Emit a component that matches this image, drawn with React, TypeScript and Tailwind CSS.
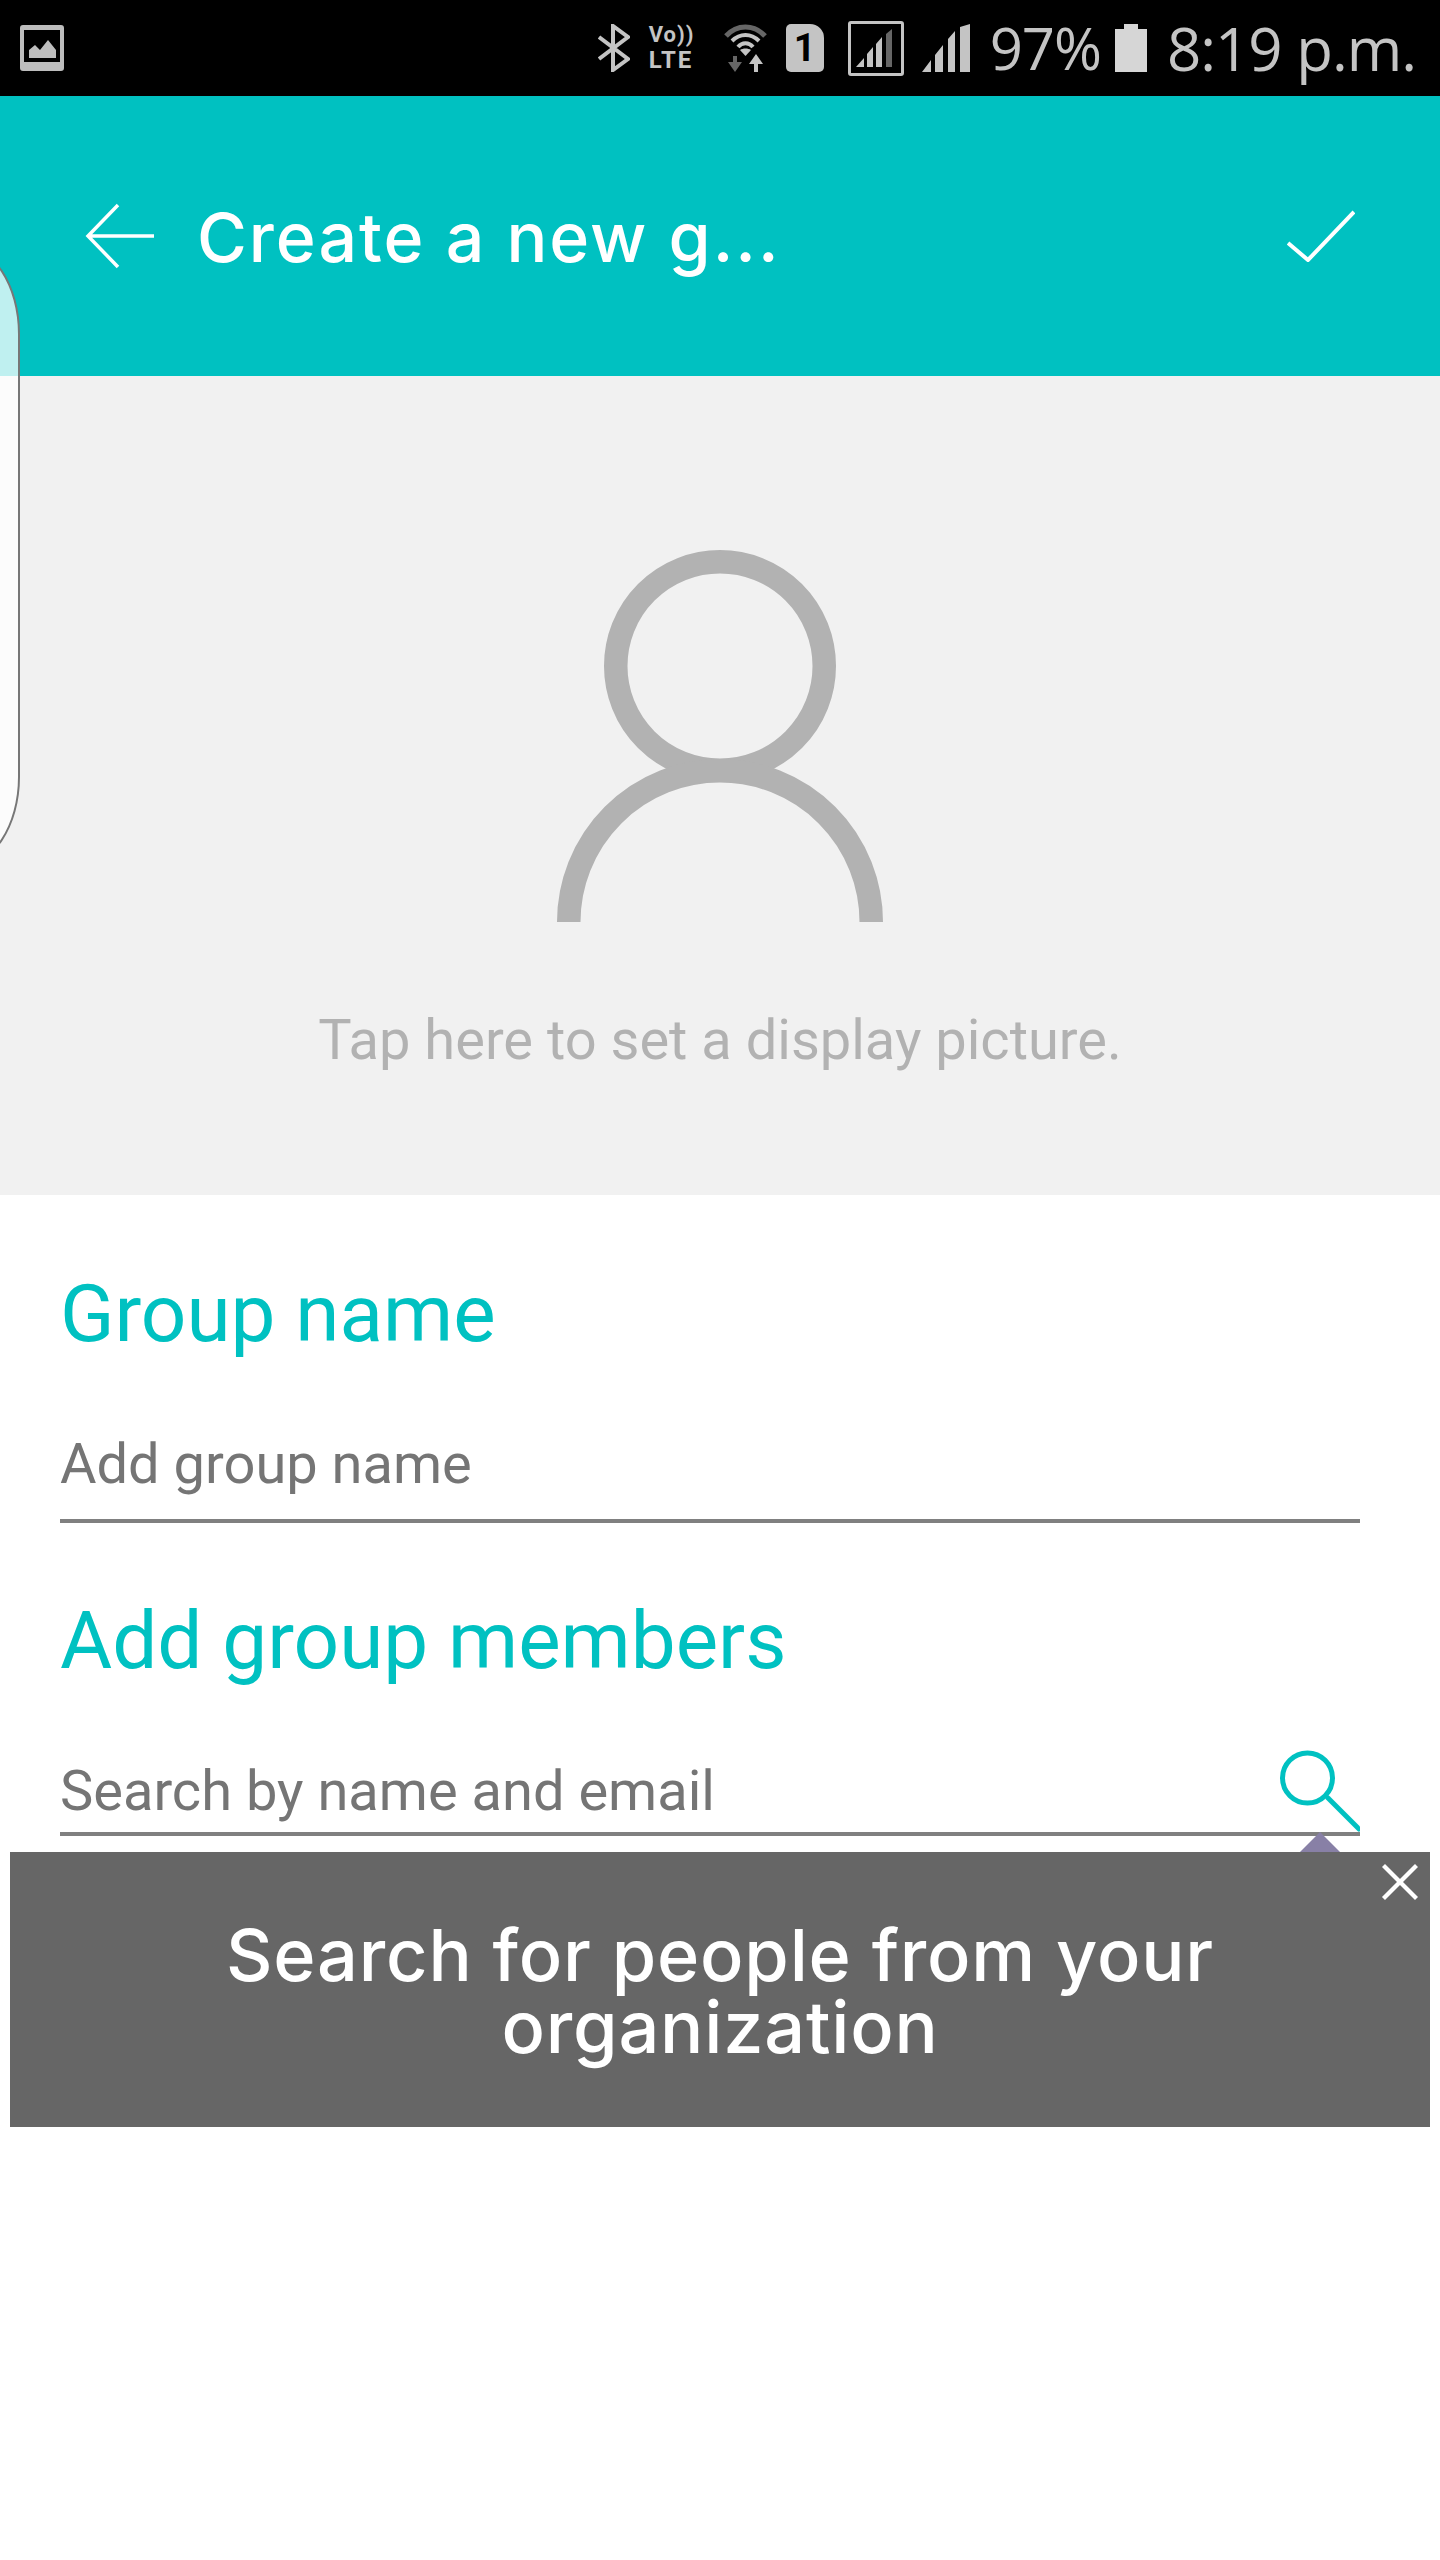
import { X } from "lucide-react";

const SANS = "font-['Roboto','Liberation_Sans',sans-serif]";
const GEO = "font-['Inter','Noto_Sans',sans-serif]";

function StatusIcons() {
  return (
    <div className="flex items-center pr-[24px] text-[#c4c4c4]">
      {/* bluetooth */}
      <svg className="h-[48px] w-[32px]" viewBox="0 0 32 48" fill="none" stroke="#c4c4c4" strokeWidth="4">
        <path d="M1 13 L30 35 L15 46 V2 L30 13 L1 35" />
      </svg>
      {/* volte */}
      <div className="ml-[19px] flex h-[48px] w-[46px] flex-col items-start gap-[2px] font-['Roboto',sans-serif] font-bold">
        <span className="text-[22px] leading-[22px] tracking-[1px]">Vo))</span>
        <span className="text-[24px] leading-[24px] tracking-[2px]">LTE</span>
      </div>
      {/* wifi */}
      <svg className="ml-[29px] h-[48px] w-[43px]" viewBox="0 0 43 48" fill="none">
        <path d="M2 12 C13 0 30 0 41 12" stroke="#666" strokeWidth="5" />
        <path d="M8 17 C16 9 27 9 35 17" stroke="#c4c4c4" strokeWidth="4" />
        <path d="M14 23 C18 18 25 18 29 23" stroke="#c4c4c4" strokeWidth="4" />
        <path d="M21.5 32 L16 26 C19 24 24 24 27 26 Z" fill="#c4c4c4" />
        <path d="M11 48 L4 38 H9 V32 H13 V38 H18 Z" fill="#666" />
        <path d="M32 30 L39 40 H34 V48 H30 V40 H25 Z" fill="#c4c4c4" />
      </svg>
      {/* sim */}
      <div className="ml-[19px] flex h-[48px] w-[38px] items-center justify-center rounded-[5px] rounded-tr-[14px] bg-[#c4c4c4] font-['Roboto',sans-serif] text-[38px] font-bold text-black">
        1
      </div>
      {/* boxed signal */}
      <div className="ml-[24px] flex h-[55px] w-[56px] items-center justify-center rounded-[3px] border-[3px] border-[#c4c4c4]">
        <svg className="h-[38px] w-[40px]" viewBox="0 0 40 38">
          <path d="M0 38 L8 29 V38 Z M11 38 V25 L17 18 V38 Z" fill="#c4c4c4" />
          <path d="M20 38 V15 L26 8 V38 Z" fill="#c4c4c4" />
          <path d="M30 38 V5 L36 0 V38 Z" fill="#666" />
        </svg>
      </div>
      {/* signal */}
      <svg className="ml-[18px] h-[48px] w-[48px]" viewBox="0 0 48 48" fill="#c4c4c4">
        <path d="M0 48 L9 36 V48 Z M13 48 V31 L21 21 V48 Z M26 48 V15 L33 7 V48 Z M38 48 V3 L48 0 V48 Z" />
      </svg>
      <span className="ml-[20px] font-['Open_Sans',sans-serif] text-[58px] leading-none font-normal tracking-[-1px]">97%</span>
      {/* battery */}
      <svg className="ml-[14px] h-[48px] w-[32px]" viewBox="0 0 32 48" fill="#d6d6d6">
        <path d="M9 0 H23 V5 H32 V48 H0 V5 H9 Z" />
      </svg>
      <span className="ml-[20px] font-['Open_Sans',sans-serif] text-[60px] leading-none font-normal tracking-[-1px]">8:19 p.m.</span>
    </div>
  );
}

function FieldRow({ placeholder, search }: { placeholder: string; search?: boolean }) {
  return (
    <div className="flex items-end justify-between border-b-4 border-[#808080]">
      <span className={`${SANS} text-[56px] leading-[80px] text-[#757575] ${search ? "pb-[1px]" : "pb-[15px]"}`}>{placeholder}</span>
      {search && (
        <svg className="h-[82px] w-[82px]" viewBox="0 0 82 82" fill="none" stroke="#00c1c1" strokeWidth="5">
          <circle cx="29.5" cy="28" r="25" />
          <path d="M50 48 L81 79" strokeLinecap="round" />
        </svg>
      )}
    </div>
  );
}

export default function App() {
  return (
    <div className="relative min-h-[2560px] overflow-hidden bg-white">
      <div className="flex h-[96px] items-center justify-between bg-black pl-[20px]">
        <svg className="h-[46px] w-[44px] shrink-0" viewBox="0 0 44 46">
          <path fillRule="evenodd" fill="#bdbdbd" d="M3 0 H41 Q44 0 44 3 V43 Q44 46 41 46 H3 Q0 46 0 43 V3 Q0 0 3 0 Z M4 5 V37 H40 V5 Z" />
          <path fill="#bdbdbd" d="M9 33 V25 L15 20 L20 25 L28 15 L36 25 V33 Z" />
        </svg>
        <StatusIcons />
      </div>

      <header className="flex h-[280px] items-center bg-[#00c1c1]">
        <svg className="ml-[84px] h-[66px] w-[72px]" viewBox="0 0 72 66" fill="none" stroke="#fff" strokeWidth="3.5">
          <path d="M34 2 L4 33 L34 64 M4 33 H70" />
        </svg>
        <h1 className={`${GEO} ml-[41px] pt-[2px] text-[68px] leading-none font-medium tracking-[2px] text-white`}>Create a new g...</h1>
        <svg className="ml-auto mr-[85px] h-[52px] w-[68px]" viewBox="0 0 68 52" fill="none" stroke="#fff" strokeWidth="4">
          <path d="M1 33 L21 50 L67 2" />
        </svg>
      </header>

      <section className="flex h-[819px] flex-col items-center bg-[#f1f1f1] pt-[174px]">
        <svg className="h-[372px] w-[326px]" viewBox="0 0 326 372" fill="none" stroke="#b2b2b2" strokeWidth="23.5">
          <circle cx="163" cy="116" r="104.25" />
          <path d="M11.75 372 A151.25 151.25 0 0 1 314.25 372" />
        </svg>
        <p className={`${SANS} mt-[78px] text-[56px] leading-[80px] text-[#b2b2b2]`}>Tap here to set a display picture.</p>
      </section>

      <section className="pl-[60px] pr-[80px] pt-[69px]">
        <h2 className={`${SANS} text-[80px] leading-[100px] text-[#00c1c1]`}>Group name</h2>
        <div className="pt-[60px]">
          <FieldRow placeholder="Add group name" />
        </div>
        <h2 className={`${SANS} mt-[68px] text-[80px] leading-[100px] text-[#00c1c1]`}>Add group members</h2>
        <div className="pt-[59px]">
          <FieldRow placeholder="Search by name and email" search />
        </div>
      </section>

      <div className="relative mx-[10px] mt-[16px] flex h-[275px] items-center justify-center bg-[#666666] pt-[2px]">
        <div className="absolute -top-[20px] left-[1290px] h-0 w-0 border-x-[20px] border-b-[20px] border-x-transparent border-b-[#8880a6]" />
        <X className="absolute right-0 top-0 h-[60px] w-[60px] text-white" strokeWidth={1.7} strokeLinecap="square" />
        <p className={`${GEO} w-[1100px] text-center text-[72px] leading-[72px] font-medium tracking-[0.8px] text-white`}>
          Search for people from your organization
        </p>
      </div>

      {/* edge handle floating over the page */}
      <div className="absolute -left-[60px] top-[244px] h-[623px] w-[80px] rounded-tr-[60px_90px] rounded-br-[60px_90px] border-2 border-[#777777] bg-white/75" />
    </div>
  );
}
